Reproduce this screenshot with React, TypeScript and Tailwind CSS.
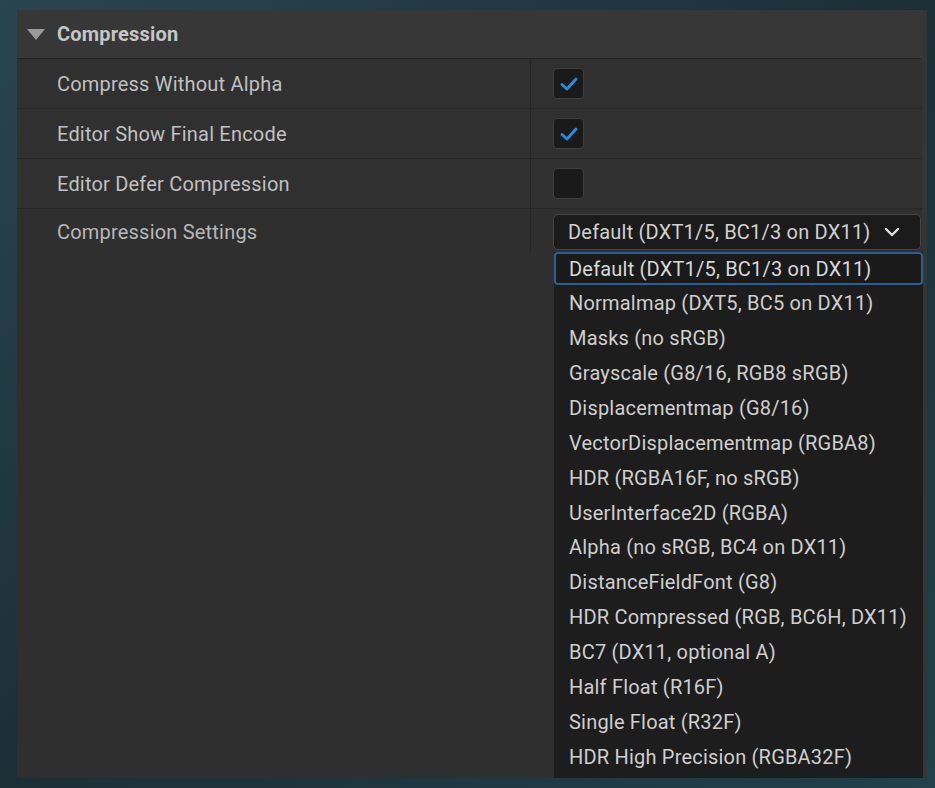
import React from "react";

const rows = [
  { label: "Compress Without Alpha", checked: true },
  { label: "Editor Show Final Encode", checked: true },
  { label: "Editor Defer Compression", checked: false },
];

const options = [
  "Default (DXT1/5, BC1/3 on DX11)",
  "Normalmap (DXT5, BC5 on DX11)",
  "Masks (no sRGB)",
  "Grayscale (G8/16, RGB8 sRGB)",
  "Displacementmap (G8/16)",
  "VectorDisplacementmap (RGBA8)",
  "HDR (RGBA16F, no sRGB)",
  "UserInterface2D (RGBA)",
  "Alpha (no sRGB, BC4 on DX11)",
  "DistanceFieldFont (G8)",
  "HDR Compressed (RGB, BC6H, DX11)",
  "BC7 (DX11, optional A)",
  "Half Float (R16F)",
  "Single Float (R32F)",
  "HDR High Precision (RGBA32F)",
];

function Check({ checked }: { checked: boolean }) {
  return (
    <div className="w-[31px] h-[31px] rounded-[4px] bg-[#1a1a1a] border border-[#3e3e3e] flex items-center justify-center">
      {checked && (
        <svg width="20" height="16" viewBox="0 0 20 16">
          <path d="M3 8.5 L8 13 L17 3" fill="none" stroke="#2e86dc" strokeWidth="3" strokeLinecap="round" strokeLinejoin="round" />
        </svg>
      )}
    </div>
  );
}

export default function App() {
  return (
    <div
      className="relative w-[935px] h-[788px] overflow-hidden bg-gradient-to-br from-[#2a4550] via-[#1c2f37] to-[#22414b] pt-[10px] pl-[17px] text-[20px] tracking-[0.2px]"
      style={{ fontFamily: "Roboto, 'Liberation Sans', sans-serif" }}
    >
      <div className="w-[910px] h-[768px] bg-[#2f2f2f] border-r-[5px] border-[#353535] flex flex-col">
        {/* section header */}
        <div className="h-[49px] shrink-0 bg-[#373737] border-b border-[#262626] flex items-center pl-[10px]">
          <svg width="18" height="11" viewBox="0 0 18 11" className="mr-[12px]">
            <path d="M0 0 H18 L9 11 Z" fill="#9a9a9a" />
          </svg>
          <span className="font-bold text-[20px] text-[#c6c6c6]">Compression</span>
        </div>

        {rows.map((r) => (
          <div key={r.label} className="h-[50px] shrink-0 flex bg-[#303030] border-b border-[#272727]">
            <div className="w-[514px] border-r border-[#262626] flex items-center pl-[40px] text-[#c0c0c0]">
              {r.label}
            </div>
            <div className="flex-1 flex items-center pl-[22px]">
              <Check checked={r.checked} />
            </div>
          </div>
        ))}

        <div className="h-[45px] shrink-0 flex">
          <div className="w-[514px] border-r border-[#262626] flex items-center pl-[40px] text-[#b8b8b8]">
            Compression Settings
          </div>
          <div className="flex-1 flex items-center pl-[22px] pr-[1px]">
            <div className="w-[368px] h-[36px] rounded-[5px] bg-[#1b1b1b] border border-[#454545] flex items-center justify-between pl-[14px] pr-[20px] text-[#d0d0d0]">
              <span>Default (DXT1/5, BC1/3 on DX11)</span>
              <svg width="16" height="10" viewBox="0 0 16 10">
                <path d="M2 2 L8 8 L14 2" fill="none" stroke="#e0e0e0" strokeWidth="2.4" strokeLinecap="round" strokeLinejoin="round" />
              </svg>
            </div>
          </div>
        </div>
      </div>

      {/* open dropdown list */}
      <div className="absolute left-[554px] top-[252px] w-[369px] h-[526px] overflow-hidden bg-[#1d1d1d] flex flex-col">
        {options.map((o, i) => (
          <div
            key={o}
            className={
              i === 0
                ? "h-[33px] shrink-0 mb-[1px] rounded-[4px] border-2 border-[#2b5f93] bg-[#1a1a1a] flex items-center pl-[13px] text-[#d8d8d8]"
                : "h-[34.86px] shrink-0 flex items-center pl-[15px] text-[#cfcfcf]"
            }
          >
            {o}
          </div>
        ))}
      </div>
    </div>
  );
}
